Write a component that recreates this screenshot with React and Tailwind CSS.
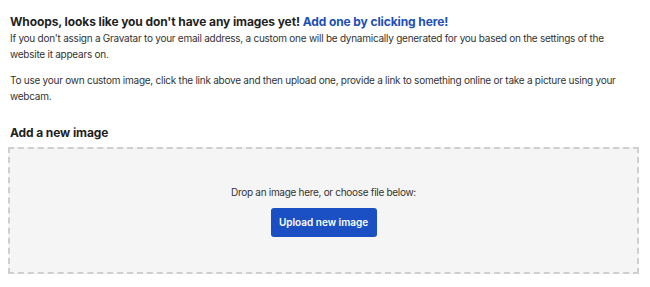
export default function App() {
  return (
    <div className="w-[650px] h-[287px] bg-white px-[10px] pt-[14px] text-[#1f1f1f]" style={{ fontFamily: 'Inter, "Noto Sans", sans-serif' }}>
      <h2 className="text-[12px] leading-[16px] font-bold tracking-[-0.1px]">
        Whoops, looks like you don't have any images yet!{' '}
        <a href="#" className="text-[#1d4fb5]">Add one by clicking here!</a>
      </h2>
      <p className="max-w-[626px] text-[10px] leading-[16px] tracking-[-0.25px] text-[#333]">
        If you don't assign a Gravatar to your email address, a custom one will be dynamically generated for you based on the settings of the website it appears on.
      </p>
      <p className="max-w-[626px] text-[10px] leading-[16px] tracking-[-0.25px] text-[#333] mt-[10px]">
        To use your own custom image, click the link above and then upload one, provide a link to something online or take a picture using your webcam.
      </p>
      <h3 className="text-[12px] leading-[16px] font-bold tracking-[-0.1px] mt-[21px]">Add a new image</h3>
      <div className="mt-[6px] -ml-[2px] w-[631px] h-[127px] bg-[#f5f5f5] border-2 border-dashed border-[#cfcfcf] flex flex-col items-center justify-center">
        <p className="text-[10px] leading-[16px] tracking-[-0.3px] text-[#333]">Drop an image here, or choose file below:</p>
        <button className="mt-[8px] h-[29px] w-[106px] rounded-[3px] bg-[#1b4fc4] text-white text-[10px] font-semibold">
          Upload new image
        </button>
      </div>
    </div>
  );
}
